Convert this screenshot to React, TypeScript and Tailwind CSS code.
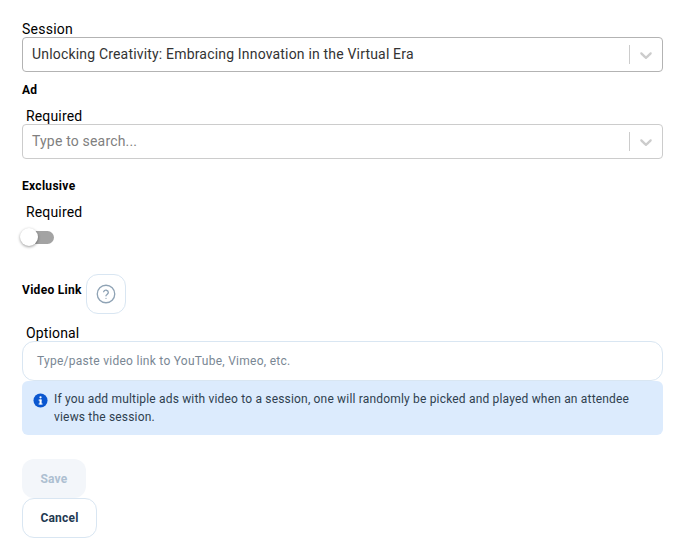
import React from 'react'

function SelectBox({ value, placeholder, dark }: { value?: string; placeholder?: string; dark?: boolean }) {
  return (
    <div
      className={`flex h-[35px] items-center rounded border bg-white pl-[9px] ${dark ? 'border-[#b3b3b3]' : 'border-[#cccccc]'}`}
    >
      <div className={`-mt-[2px] flex-1 text-sm tracking-[0.18px] ${value ? 'text-[#333333]' : 'text-[#808080]'}`}>{value ?? placeholder}</div>
      <span className="h-[19px] w-px bg-[#cccccc]" />
      <div className="flex w-[32px] justify-center">
        <svg width="20" height="20" viewBox="0 0 20 20" fill="#cccccc">
          <path d="M4.516 7.548c0.436-0.446 1.043-0.481 1.576 0l3.908 3.747 3.908-3.747c0.533-0.481 1.141-0.446 1.574 0 0.436 0.445 0.408 1.197 0 1.615-0.406 0.418-4.695 4.502-4.695 4.502-0.217 0.223-0.502 0.335-0.787 0.335s-0.57-0.112-0.789-0.335c0 0-4.287-4.084-4.695-4.502s-0.436-1.17 0-1.615z" />
        </svg>
      </div>
    </div>
  )
}

export default function App() {
  return (
    <div className="h-[556px] w-[684px] overflow-hidden bg-white pl-[22px] pr-[21px] pt-[21px] font-['Roboto',sans-serif] text-black">
      {/* Session */}
      <div className="text-sm leading-4 tracking-[0.25px]">Session</div>
      <SelectBox value="Unlocking Creativity: Embracing Innovation in the Virtual Era" dark />

      {/* Ad */}
      <div className="mt-[11px] text-xs font-bold leading-[15px] tracking-[0.3px]">Ad</div>
      <div className="mt-[10px] pl-1 text-sm leading-4 tracking-[0.15px]">Required</div>
      <SelectBox placeholder="Type to search..." />

      {/* Exclusive */}
      <div className="mt-[20px] text-xs font-bold leading-[15px] tracking-[0.3px]">Exclusive</div>
      <div className="mt-[10px] pl-1 text-sm leading-4 tracking-[0.15px]">Required</div>
      <div className="relative mt-[11px] h-[13px] w-[34px]">
        <div className="absolute left-[4px] top-0 h-[13px] w-[28px] rounded-full bg-[#a3a3a3]" />
        <div className="absolute left-[-2px] top-[-3px] h-[18px] w-[18px] rounded-full bg-white shadow-[0_1px_3px_rgba(0,0,0,0.4)]" />
      </div>

      {/* Video link */}
      <div className="mt-[30px] flex items-start gap-1">
        <div className="mt-[9px] text-xs font-bold leading-[15px] tracking-[0.3px]">Video Link</div>
        <div className="flex h-10 w-10 items-center justify-center rounded-xl border border-[#d9e6f2] bg-white">
          <svg width="20" height="20" viewBox="0 0 24 24" fill="none" stroke="#8fa3b5" strokeWidth="1.6" strokeLinecap="round" strokeLinejoin="round">
            <circle cx="12" cy="12" r="10.5" />
            <path d="M9.2 9.3a2.9 2.9 0 0 1 5.6 1c0 1.9-2.8 2.4-2.8 3.9" />
            <path d="M12 17.2h.01" />
          </svg>
        </div>
      </div>
      <div className="mt-[11px] pl-1 text-sm leading-4 tracking-[0.15px]">Optional</div>
      <div className="flex h-10 items-center rounded-xl border border-[#d9e6f2] bg-white pl-[14px] text-xs tracking-[0.27px] text-[#7a8794]">
        Type/paste video link to YouTube, Vimeo, etc.
      </div>

      {/* Info note */}
      <div className="flex h-[54px] gap-[6px] rounded-md bg-[#dcebfd] pl-[11px] pr-4 pt-[9px] text-xs leading-[18px] tracking-[0.18px] text-[#2f3f4f]">
        <svg className="mt-[3px] shrink-0" width="15" height="15" viewBox="0 0 16 16">
          <circle cx="8" cy="8" r="7.5" fill="#0b57d0" />
          <rect x="7" y="7" width="2.2" height="5" fill="#ffffff" />
          <rect x="6" y="7" width="3" height="1.1" fill="#ffffff" />
          <rect x="6" y="11.2" width="4.2" height="1.1" fill="#ffffff" />
          <circle cx="8" cy="4.6" r="1.2" fill="#ffffff" />
        </svg>
        <p>
          If you add multiple ads with video to a session, one will randomly be picked and played when an attendee views the session.
        </p>
      </div>

      {/* Actions */}
      <div className="mt-6 flex flex-col items-start">
        <button type="button" className="h-[39px] w-16 rounded-xl bg-[#f3f6fa] text-xs font-bold tracking-[0.2px] text-[#adbfd1]">
          Save
        </button>
        <button type="button" className="h-10 w-[75px] rounded-xl border border-[#d9e6f2] bg-white text-xs font-bold tracking-[0.2px] text-[#1f3a52]">
          Cancel
        </button>
      </div>
    </div>
  )
}
